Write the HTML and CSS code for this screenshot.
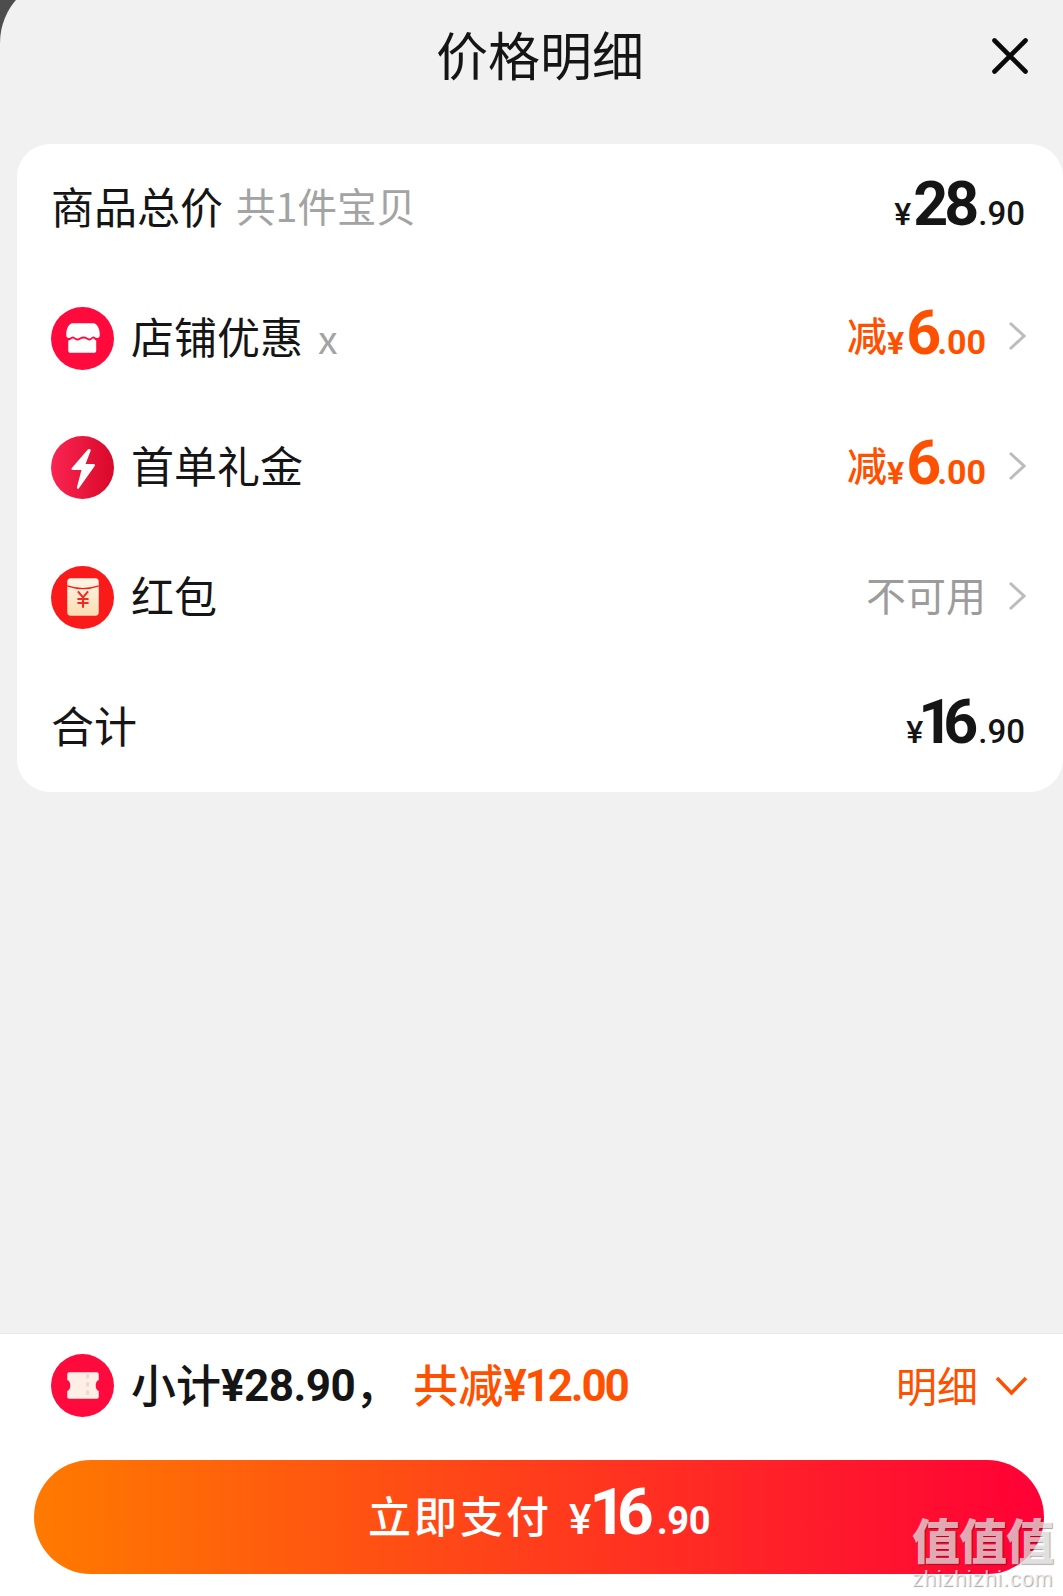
FILE: index.html
```html
<!DOCTYPE html>
<html lang="zh-CN">
<head>
<meta charset="utf-8">
<title>价格明细</title>
<link rel="stylesheet" href="styles.css">
</head>
<body>
<div class="sheet">
  <header class="head">
    <h1 class="title">价格明细</h1>
    <button class="close" aria-label="关闭">
      <svg width="36" height="36" viewBox="0 0 36 36"><path d="M2.500 2.500 33.500 33.500M33.500 2.500 2.500 33.500" fill="none" stroke="#0a0a0a" stroke-width="4.600" stroke-linecap="round"/></svg>
    </button>
  </header>

  <section class="card">
    <div class="row">
      <div class="label"><span class="t">商品总价</span><span class="t note">共1件宝贝</span></div>
      <div class="price total"><span class="yen">¥</span><span class="int">28</span><span class="dec">.90</span></div>
    </div>
    <div class="row">
      <div class="label">
        <svg class="icon" viewBox="0 0 62 62"><circle cx="31" cy="31" r="31" fill="#ff0a3c"/><path d="M21 16H42C45 16 48 21 48 27C48 29.500 47 30.500 45.500 30.500C43.500 30.500 43 29 41.800 29C40.500 29 39.500 31 37.800 31C36 31 35 29 32 29C29.500 29 28 31 26 31C24 31 23 29 21.500 29C20 29 19.500 30.500 17.500 30.500C16 30.500 15 29.500 15 27C15 21 18 16 21 16Z" fill="#fff"/><path d="M17 33C19 33 20 31 21.500 31C23 31 24 33 26 33C28 33 29.500 31 32 31C35 31 36 33 37.800 33C39.500 33 40.500 31 41.800 31C43 31 43 33 44.500 33V43C44.500 44.500 43.500 45 42.500 45H19C18 45 17 44.500 17 43Z" fill="#fff"/></svg>
        <span class="t">店铺优惠</span><span class="t note x">x</span>
      </div>
      <div class="side">
        <div class="price minus"><span class="jian">减</span><span class="yen">¥</span><span class="int">6</span><span class="dec">.00</span></div>
        <svg class="chev" width="18" height="30" viewBox="0 0 18 30"><path d="M2 2 16 15 2 28" fill="none" stroke="#bcbcbc" stroke-width="3"/></svg>
      </div>
    </div>
    <div class="row">
      <div class="label">
        <svg class="icon" viewBox="0 0 62 62"><defs><linearGradient id="bolt" x1="0" x2="1" y1="0" y2="0"><stop offset="0" stop-color="#fa2552"/><stop offset="1" stop-color="#d90829"/></linearGradient></defs><circle cx="31" cy="31" r="31" fill="url(#bolt)"/><path d="M36 13.500 20.500 31.500C19.800 32.500 20.300 33.500 21.500 33.500H30L25.500 50.500C25.200 52 26.500 52.500 27.500 51.500L43 29.500C43.700 28.500 43.200 27.500 42 27.500H34L39 14.500C39.400 12.800 37 12.300 36 13.500Z" fill="#fff"/></svg>
        <span class="t">首单礼金</span>
      </div>
      <div class="side">
        <div class="price minus"><span class="jian">减</span><span class="yen">¥</span><span class="int">6</span><span class="dec">.00</span></div>
        <svg class="chev" width="18" height="30" viewBox="0 0 18 30"><path d="M2 2 16 15 2 28" fill="none" stroke="#bcbcbc" stroke-width="3"/></svg>
      </div>
    </div>
    <div class="row">
      <div class="label">
        <svg class="icon" viewBox="0 0 62 62"><defs><linearGradient id="env" x1="0" x2="0" y1="0" y2="1"><stop offset="0" stop-color="#fff6e6"/><stop offset="1" stop-color="#fbdcb2"/></linearGradient></defs><circle cx="31" cy="31" r="31" fill="#fb1a1a"/><rect x="16" y="12" width="31" height="37" rx="3.500" fill="url(#env)"/><path d="M16 19.500C26 23 37 23 47 19.500" fill="none" stroke="#fb1a1a" stroke-width="1.200"/><path d="M26.500 25 31.500 31 36.500 25M26 32.500H37M26 36.500H37M31.500 31V41" fill="none" stroke="#f22a22" stroke-width="2"/></svg>
        <span class="t">红包</span>
      </div>
      <div class="side">
        <div class="t muted">不可用</div>
        <svg class="chev" width="18" height="30" viewBox="0 0 18 30"><path d="M2 2 16 15 2 28" fill="none" stroke="#bcbcbc" stroke-width="3"/></svg>
      </div>
    </div>
    <div class="row">
      <div class="label"><span class="t">合计</span></div>
      <div class="price total"><span class="yen">¥</span><span class="int narrow">16</span><span class="dec">.90</span></div>
    </div>
  </section>

  <div class="spacer"></div>

  <footer class="foot">
    <div class="summary">
      <div class="label strong">
        <svg class="icon" viewBox="0 0 62 62"><circle cx="31" cy="31" r="31" fill="#ff0a3c"/><path d="M18 18H45C46.500 18 47 19 47 20V25.500C45 26 44 28.500 44 31C44 33.500 45 36 47 36.500V42C47 43 46.500 44 45 44H18C16.500 44 16 43 16 42V36.500C18 36 19 33.500 19 31C19 28.500 18 26 16 25.500V20C16 19 16.500 18 18 18Z" fill="#fdeee6"/><path d="M36 20V42" stroke="#eed7cc" stroke-width="3" stroke-dasharray="4 4"/></svg>
        <span class="t">小计</span><span class="t num">¥28.90</span><span class="t comma">，</span><span class="t off">共减</span><span class="t off num num-off">¥12.00</span>
      </div>
      <div class="detail"><span class="t">明细</span>
        <svg width="33" height="22" viewBox="0 0 33 22"><path d="M2 3 16.500 18 31 3" fill="none" stroke="#ff5000" stroke-width="3.500"/></svg>
      </div>
    </div>
    <button class="pay"><span class="t pay-text">立即支付</span><span class="price paid"><span class="yen">¥</span><span class="int narrow">16</span><span class="dec">.90</span></span></button>
  </footer>
</div>
<div class="mark"><div class="mark-cn">值值值</div><div class="mark-en">zhizhizhi.com</div></div>
</body>
</html>
```
FILE: styles.css
```css
* { box-sizing: border-box; }
html, body { margin: 0; height: 1596px; overflow: hidden; }
body {
  background: #4d4d4d;
  position: relative;
  color: #151515;
  font-family: "Noto Sans CJK SC", "Noto Sans", sans-serif;
}
.sheet {
  margin-top: -23px;
  height: 1619px;
  background: #f1f1f1;
  border-top-left-radius: 66px;
  display: flex;
  flex-direction: column;
}
.head {
  height: 167px;
  padding: 20px 0 33px 17px;
  position: relative;
  display: flex;
  justify-content: center;
}
.title {
  margin: 0;
  font-size: 52px;
  font-weight: 400;
  line-height: 114px;
}
.close {
  position: absolute;
  right: 35px;
  top: 61px;
  padding: 0;
  width: 36px;
  height: 36px;
  border: 0;
  background: none;
  display: flex;
}
.card {
  margin-left: 17px;
  height: 648px;
  background: #fff;
  border-radius: 33px;
  display: flex;
  flex-direction: column;
  flex: none;
}
.row {
  flex: 1;
  padding: 0 38px 0 34px;
  display: flex;
  align-items: center;
  justify-content: space-between;
}
.label {
  display: flex;
  align-items: center;
  font-size: 43px;
  line-height: 60px;
  white-space: nowrap;
}
.t { padding-bottom: 7px; }
.icon {
  width: 63px;
  height: 63px;
  margin-right: 17px;
  flex: none;
}
.note {
  margin-left: 13px;
  font-size: 39.500px;
  color: #a3a3a3;
}
.x { padding-bottom: 2px; margin-left: 15px; }
.side {
  display: flex;
  align-items: center;
  gap: 22px;
}
.chev { flex: none; margin-bottom: 4px; margin-right: -1px; }
.muted {
  font-size: 40px;
  color: #9c9c9c;
}
.price {
  display: flex;
  align-items: baseline;
  font-family: Roboto, "Liberation Sans", sans-serif;
  font-weight: 500;
  line-height: 70px;
}
.yen { font-size: 32px; }
.int {
  font-size: 61px;
  font-weight: 700;
  letter-spacing: -4px;
  margin-left: 2px;
  margin-right: 3px;
}
.narrow {
  letter-spacing: -10px;
  margin-left: -5px;
  margin-right: 10px;
}
.dec {
  font-size: 33px;
  letter-spacing: 0;
}
.minus { color: #ff5000; font-weight: 700; }
.minus .int { margin-right: 0; }
.minus .dec { font-size: 34px; }
.jian {
  font-family: "Noto Sans CJK SC", sans-serif;
  font-size: 40px;
  font-weight: 500;
  transform: translateY(-3px);
}
.spacer { flex: 1; }
.foot {
  height: 263px;
  background: #fff;
  border-top: 1px solid #e9e9e9;
  flex: none;
}
.summary {
  height: 103px;
  padding: 0 35px 0 51px;
  display: flex;
  align-items: center;
  justify-content: space-between;
}
.strong { font-size: 45px; font-weight: 500; }
.strong .t, .detail .t { padding-bottom: 3px; }
.strong .num {
  font-family: Roboto, "Liberation Sans", sans-serif;
  font-size: 44px;
  font-weight: 700;
  letter-spacing: -.5px;
  padding-bottom: 0;
}
.strong .num-off { letter-spacing: -2.200px; }
.comma { width: 58px; }
.off { color: #ff5000; }
.detail {
  display: flex;
  align-items: center;
  gap: 17px;
  font-size: 41px;
  color: #ff5000;
}
.pay {
  margin: 23px 0 0 34px;
  width: 1010px;
  height: 114px;
  border: 0;
  padding: 0;
  border-radius: 57px;
  background: linear-gradient(90deg, #ff7a00, #ff0037);
  color: #fff;
  display: flex;
  align-items: center;
  justify-content: center;
  gap: 17px;
  font-family: "Noto Sans CJK SC", sans-serif;
}
.pay-text {
  font-size: 43px;
  font-weight: 500;
  letter-spacing: 3px;
}
.paid .yen { font-size: 42px; }
.paid .int { font-size: 64px; margin-left: -2px; margin-right: 12px; letter-spacing: -9px; }
.paid .dec { font-size: 38px; font-weight: 700; letter-spacing: -.5px; }
.mark {
  position: absolute;
  left: 912px;
  top: 1511px;
  width: 145px;
  color: rgba(255, 255, 255, .68);
  text-shadow: 1px 1px 1px rgba(0, 0, 0, .35);
  pointer-events: none;
}
.mark-cn {
  font-size: 48px;
  font-weight: 900;
  line-height: 54px;
  letter-spacing: -1px;
  white-space: nowrap;
}
.mark-en {
  font-family: "Liberation Sans", sans-serif;
  font-size: 22px;
  line-height: 22px;
  margin-top: 3px;
  letter-spacing: .7px;
  white-space: nowrap;
}
```
